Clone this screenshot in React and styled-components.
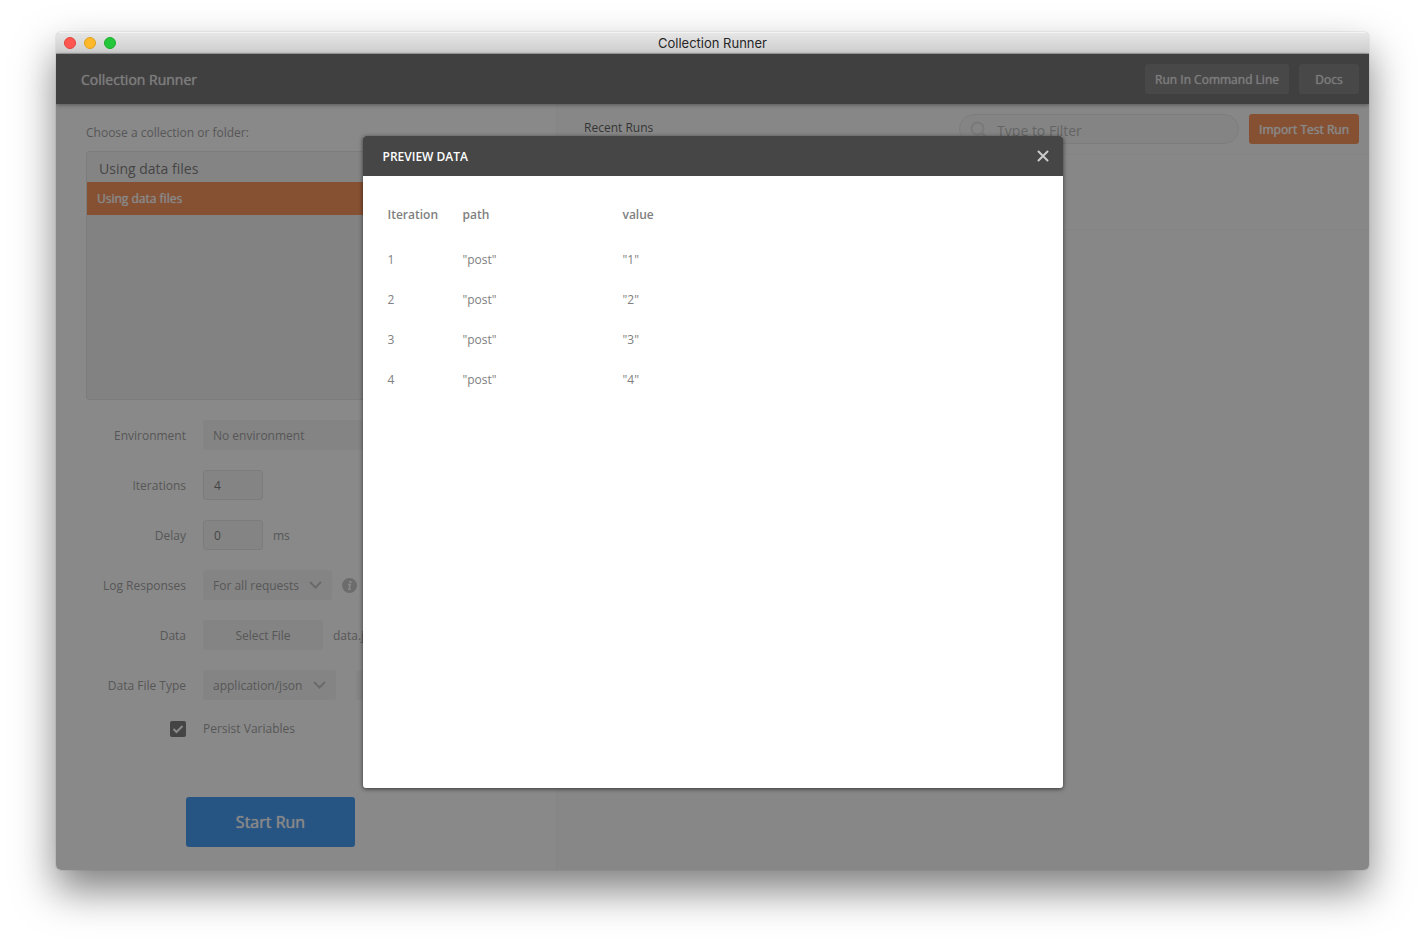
import React, { useState } from 'react';
import styled, { createGlobalStyle } from 'styled-components';

const GlobalStyle = createGlobalStyle`
  * {
    box-sizing: border-box;
  }

  body {
    margin: 0;
    background: #ffffff;
    font-family: 'Open Sans', sans-serif;
    font-size: 12px;
    color: #808080;
  }

  button, input, select {
    font-family: inherit;
    font-size: 12px;
  }
`;

const Desktop = styled.div`
  min-height: 100vh;
  padding: 32px 56px 80px;
  display: flex;
`;

const Window = styled.div`
  flex: 1;
  display: flex;
  flex-direction: column;
  border-radius: 5px;
  overflow: hidden;
  box-shadow: 0 0 1px rgba(0, 0, 0, 0.5), 0 20px 40px rgba(0, 0, 0, 0.5);
`;

const TitleBar = styled.div`
  height: 22px;
  padding: 0 8px;
  display: grid;
  grid-template-columns: 1fr auto 1fr;
  align-items: center;
  background: linear-gradient(#e6e6e6, #cdcdcd);
  border-top: 1px solid #f4f4f4;
  border-bottom: 1px solid #a8a8a8;
`;

const Lights = styled.div`
  display: flex;
  gap: 8px;
`;

const Light = styled.button`
  width: 12px;
  height: 12px;
  padding: 0;
  border-radius: 50%;
  border: 1px solid ${({ $border }) => $border};
  background: ${({ $color }) => $color};
`;

const WindowTitle = styled.div`
  font-family: Inter, sans-serif;
  font-size: 13px;
  color: #262626;
`;

const Main = styled.div`
  position: relative;
  flex: 1;
  display: flex;
  flex-direction: column;
`;

const Header = styled.header`
  position: relative;
  height: 50px;
  padding: 0 10px 0 25px;
  display: flex;
  align-items: center;
  gap: 10px;
  background: #464646;
  box-shadow: 0 1px 4px rgba(0, 0, 0, 0.5);
`;

const HeaderTitle = styled.h1`
  flex: 1;
  margin: 0;
  font-size: 14px;
  font-weight: 500;
  color: #dcdcdc;
  text-shadow: 0 0 1px #dcdcdc;
`;

const Button = styled.button`
  height: 30px;
  min-width: ${({ $minWidth }) => $minWidth || '0'};
  padding: 0 10px;
  border: 0;
  border-radius: 3px;
  background: ${({ $variant }) =>
    $variant === 'dark' ? '#5a5a5a' : $variant === 'primary' ? '#f47023' : '#f0f0f0'};
  color: ${({ $variant }) =>
    $variant === 'dark' ? '#dcdcdc' : $variant === 'primary' ? '#fafafa' : '#808080'};
  font-weight: ${({ $variant }) => ($variant ? 500 : 400)};
  text-shadow: ${({ $variant }) => ($variant ? '0 0 1px currentColor' : 'none')};
  white-space: nowrap;
`;

const Columns = styled.div`
  flex: 1;
  display: flex;
`;

const Sidebar = styled.section`
  width: 501px;
  padding: 18px 30px 23px;
  background: #fcfcfc;
  border-right: 1px solid #f0f0f0;
`;

const PickerLabel = styled.div`
  line-height: 21px;
  margin-bottom: 8px;
`;

const Picker = styled.div`
  height: 249px;
  border: 1px solid #dcdcdc;
  border-radius: 3px;
  background: #eaeaea;
  overflow: hidden;
`;

const PickerHead = styled.div`
  height: 30px;
  padding: 2px 12px 0;
  display: flex;
  align-items: center;
  background: #f0f0f0;
  font-size: 14px;
  color: #505050;
`;

const PickerItem = styled.button`
  display: block;
  width: 100%;
  height: 33px;
  padding: 0 10px;
  border: 0;
  background: #f47023;
  color: #fafafa;
  font-weight: 500;
  text-shadow: 0 0 1px #fafafa;
  text-align: left;
`;

const Form = styled.form`
  margin-top: 20px;
  display: flex;
  flex-direction: column;
  gap: 20px;
`;

const Row = styled.div`
  height: ${({ $height }) => $height || '30px'};
  display: flex;
  align-items: center;
`;

const RowLabel = styled.label`
  width: 100px;
  margin-right: 17px;
  text-align: right;
`;

const NumberInput = styled.input`
  width: 60px;
  height: 30px;
  padding: 0 10px;
  border: 1px solid #dcdcdc;
  border-radius: 3px;
  background: #f0f0f0;
  color: #505050;
`;

const Note = styled.span`
  margin-left: 10px;
`;

const SelectBox = styled.div`
  width: ${({ $width }) => $width};
  height: 30px;
  display: grid;
  align-items: center;
  border-radius: 3px;
  background: #f0f0f0;

  select,
  svg {
    grid-area: 1 / 1;
  }

  select {
    appearance: none;
    width: 100%;
    height: 30px;
    padding: 0 30px 0 10px;
    border: 0;
    background: transparent;
    color: #808080;
  }

  svg {
    justify-self: end;
    margin-right: 10px;
    pointer-events: none;
  }
`;

const InfoSvg = styled.svg`
  margin-left: 10px;
`;

const PreviewButton = styled(Button)`
  margin-left: 20px;
`;

const CheckCell = styled.div`
  width: 100px;
  margin-right: 17px;
  display: grid;
  justify-content: end;

  input,
  svg {
    grid-area: 1 / 1;
  }

  input {
    appearance: none;
    width: 16px;
    height: 16px;
    margin: 0;
    border-radius: 2px;
    background: #505050;
  }

  svg {
    pointer-events: none;
  }
`;

const StartButton = styled(Button)`
  align-self: flex-start;
  width: 169px;
  height: 50px;
  margin: 40px 0 0 100px;
  background: #097bed;
  font-size: 16px;
`;

const Runs = styled.section`
  flex: 1;
  background: #f8f8f8;
`;

const RunsBar = styled.div`
  height: 51px;
  padding: 0 10px 0 27px;
  display: flex;
  align-items: center;
  gap: 10px;
  border-bottom: 1px solid #f0f0f0;
`;

const RunsTitle = styled.h2`
  flex: 1;
  margin: 0;
  padding-bottom: 4px;
  font-size: 12px;
  font-weight: 400;
  color: #282828;
`;

const Filter = styled.label`
  width: 280px;
  height: 30px;
  padding: 0 10px;
  display: flex;
  align-items: center;
  gap: 10px;
  border: 1px solid #dcdcdc;
  border-radius: 15px;
  background: #f0f0f0;

  input {
    flex: 1;
    min-width: 0;
    padding: 2px 0 0;
    border: 0;
    background: transparent;
    font-size: 14px;
  }

  input::placeholder {
    color: #a0a0a0;
  }
`;

const RunRow = styled.div`
  height: 75px;
  border-bottom: 1px solid #f0f0f0;
`;

const Overlay = styled.div`
  position: absolute;
  inset: 0;
  display: flex;
  align-items: center;
  justify-content: center;
  background: rgba(60, 60, 60, 0.6);
`;

const Modal = styled.div`
  width: 700px;
  height: 80%;
  display: flex;
  flex-direction: column;
  border-radius: 3px;
  background: #ffffff;
  overflow: hidden;
  box-shadow: 0 1px 4px rgba(0, 0, 0, 0.6);
`;

const ModalHeader = styled.div`
  height: 40px;
  padding: 0 14px 0 20px;
  display: flex;
  align-items: center;
  justify-content: space-between;
  background: #464646;
`;

const ModalTitle = styled.h2`
  margin: 0;
  padding-top: 2px;
  font-size: 12px;
  line-height: 18px;
  font-weight: 600;
  color: #ffffff;
`;

const CloseButton = styled.button`
  display: flex;
  padding: 0;
  border: 0;
  background: transparent;
`;

const ModalBody = styled.div`
  flex: 1;
  padding: 14px 25px;
  overflow: auto;
`;

const DataTable = styled.table`
  border-collapse: collapse;

  th,
  td {
    height: 40px;
    padding: 0;
    text-align: left;
  }

  th {
    height: 50px;
    min-width: 160px;
    font-weight: 600;
  }

  th:first-child {
    min-width: 75px;
  }
`;

const Chevron = () => (
  <svg width="13" height="8" viewBox="0 0 13 8" fill="none" stroke="#b0b0b0" strokeWidth="2">
    <path d="M1 1 L6.5 6.5 L12 1" />
  </svg>
);

const InfoIcon = () => (
  <InfoSvg width="15" height="15" viewBox="0 0 15 15">
    <circle cx="7.5" cy="7.5" r="7.5" fill="#b4b4b4" />
    <circle cx="8.4" cy="3.9" r="1.2" fill="#fcfcfc" />
    <path d="M6 6.6 H8.2 L7 11.2 H8.8" fill="none" stroke="#fcfcfc" strokeWidth="1.5" />
  </InfoSvg>
);

const rows = [
  { path: 'post', value: '1' },
  { path: 'post', value: '2' },
  { path: 'post', value: '3' },
  { path: 'post', value: '4' },
];

const App = () => {
  const [showPreview, setShowPreview] = useState(true);
  const [persist, setPersist] = useState(true);

  return (
    <Desktop>
      <GlobalStyle />
      <Window>
        <TitleBar>
          <Lights>
            <Light aria-label="Close window" $color="#ff5650" $border="#e2443e" />
            <Light aria-label="Minimize window" $color="#ffb829" $border="#dfa023" />
            <Light aria-label="Zoom window" $color="#24c63a" $border="#1dad2b" />
          </Lights>
          <WindowTitle>Collection Runner</WindowTitle>
        </TitleBar>

        <Main>
          <Header>
            <HeaderTitle>Collection Runner</HeaderTitle>
            <Button $variant="dark">Run In Command Line</Button>
            <Button $variant="dark" $minWidth="60px">Docs</Button>
          </Header>

          <Columns>
            <Sidebar>
              <PickerLabel>Choose a collection or folder:</PickerLabel>
              <Picker>
                <PickerHead>Using data files</PickerHead>
                <PickerItem>Using data files</PickerItem>
              </Picker>

              <Form onSubmit={(e) => e.preventDefault()}>
                <Row>
                  <RowLabel htmlFor="environment">Environment</RowLabel>
                  <SelectBox $width="240px">
                    <select id="environment">
                      <option>No environment</option>
                    </select>
                    <Chevron />
                  </SelectBox>
                </Row>
                <Row>
                  <RowLabel htmlFor="iterations">Iterations</RowLabel>
                  <NumberInput id="iterations" defaultValue="4" />
                </Row>
                <Row>
                  <RowLabel htmlFor="delay">Delay</RowLabel>
                  <NumberInput id="delay" defaultValue="0" />
                  <Note>ms</Note>
                </Row>
                <Row>
                  <RowLabel htmlFor="log">Log Responses</RowLabel>
                  <SelectBox $width="129px">
                    <select id="log">
                      <option>For all requests</option>
                    </select>
                    <Chevron />
                  </SelectBox>
                  <InfoIcon />
                </Row>
                <Row>
                  <RowLabel htmlFor="file">Data</RowLabel>
                  <Button id="file" type="button" $minWidth="120px">Select File</Button>
                  <Note>data.json</Note>
                </Row>
                <Row>
                  <RowLabel htmlFor="type">Data File Type</RowLabel>
                  <SelectBox $width="133px">
                    <select id="type">
                      <option>application/json</option>
                    </select>
                    <Chevron />
                  </SelectBox>
                  <PreviewButton type="button" onClick={() => setShowPreview(true)}>
                    Preview
                  </PreviewButton>
                </Row>
                <Row $height="17px">
                  <CheckCell>
                    <input
                      id="persist"
                      type="checkbox"
                      checked={persist}
                      onChange={() => setPersist(!persist)}
                    />
                    {persist && (
                      <svg width="16" height="16" viewBox="0 0 16 16" fill="none" stroke="#fcfcfc" strokeWidth="2">
                        <path d="M3.5 8 L6.5 11 L12.5 5" />
                      </svg>
                    )}
                  </CheckCell>
                  <label htmlFor="persist">Persist Variables</label>
                </Row>
                <StartButton $variant="primary">Start Run</StartButton>
              </Form>
            </Sidebar>

            <Runs>
              <RunsBar>
                <RunsTitle>Recent Runs</RunsTitle>
                <Filter>
                  <svg width="17" height="17" viewBox="0 0 17 17" fill="none" stroke="#d4d4d4" strokeWidth="2">
                    <circle cx="7.5" cy="7.5" r="6" />
                    <path d="M12 12 L16 16" />
                  </svg>
                  <input type="text" placeholder="Type to Filter" aria-label="Type to Filter" />
                </Filter>
                <Button $variant="primary">Import Test Run</Button>
              </RunsBar>
              <RunRow />
            </Runs>
          </Columns>

          {showPreview && (
            <Overlay>
              <Modal role="dialog" aria-label="Preview data">
                <ModalHeader>
                  <ModalTitle>PREVIEW DATA</ModalTitle>
                  <CloseButton aria-label="Close" onClick={() => setShowPreview(false)}>
                    <svg width="12" height="12" viewBox="0 0 12 12" stroke="#cccccc" strokeWidth="2" strokeLinecap="round">
                      <path d="M1.5 1.5 L10.5 10.5 M10.5 1.5 L1.5 10.5" />
                    </svg>
                  </CloseButton>
                </ModalHeader>
                <ModalBody>
                  <DataTable>
                    <thead>
                      <tr>
                        <th>Iteration</th>
                        <th>path</th>
                        <th>value</th>
                      </tr>
                    </thead>
                    <tbody>
                      {rows.map((row, i) => (
                        <tr key={row.value}>
                          <td>{i + 1}</td>
                          <td>"{row.path}"</td>
                          <td>"{row.value}"</td>
                        </tr>
                      ))}
                    </tbody>
                  </DataTable>
                </ModalBody>
              </Modal>
            </Overlay>
          )}
        </Main>
      </Window>
    </Desktop>
  );
};

export default App;
